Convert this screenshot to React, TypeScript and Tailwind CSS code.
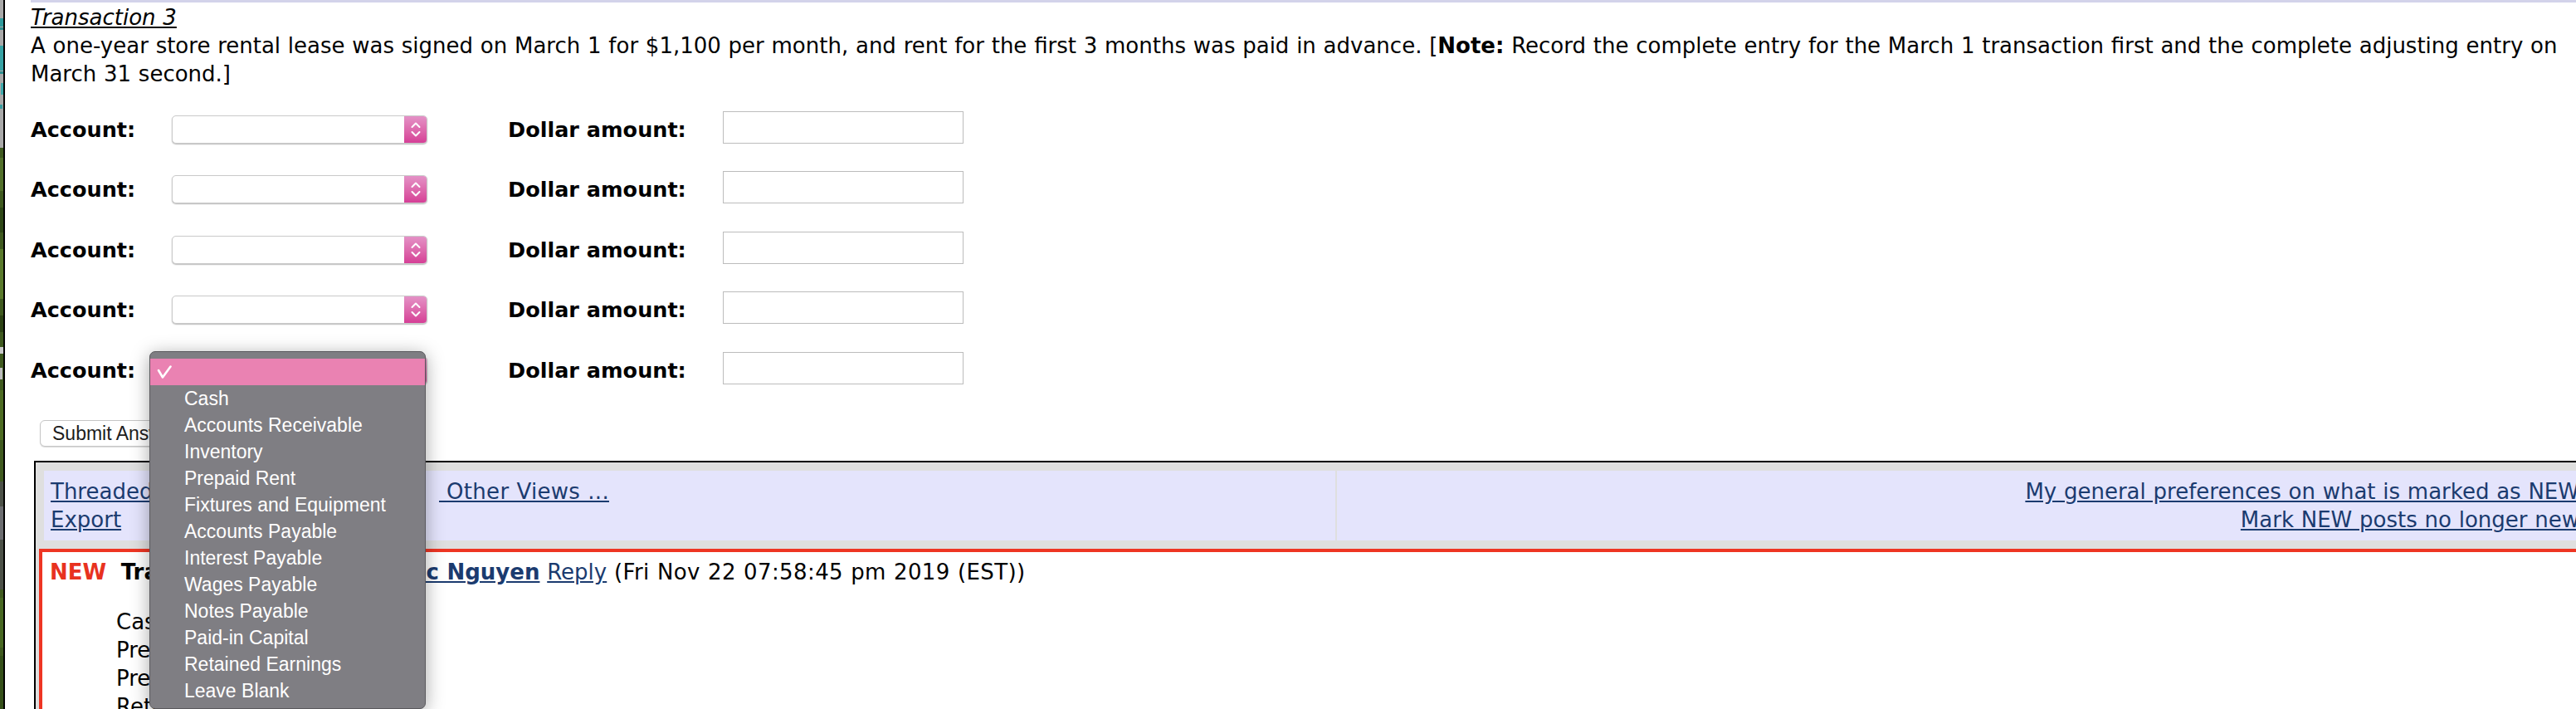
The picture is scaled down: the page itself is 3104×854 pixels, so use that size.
import React from "react";

const menuItems = [
  "Cash",
  "Accounts Receivable",
  "Inventory",
  "Prepaid Rent",
  "Fixtures and Equipment",
  "Accounts Payable",
  "Interest Payable",
  "Wages Payable",
  "Notes Payable",
  "Paid-in Capital",
  "Retained Earnings",
  "Leave Blank",
];

function LeftStrip() {
  return (
    <div className="flex h-full w-[6px] shrink-0 border-r-2 border-black">
      <svg width="4" height="854" viewBox="0 0 4 854" className="block">
        <rect x="0" y="0" width="4" height="178" fill="#a9a9a9" />
        <rect x="0" y="22" width="4" height="10" fill="#2f9a9c" />
        <rect x="0" y="33" width="4" height="3" fill="#2f8f90" />
        <rect x="0" y="55" width="4" height="30" fill="#38a3a5" />
        <rect x="0" y="86" width="4" height="3" fill="#2f8f90" />
        <rect x="1" y="100" width="3" height="14" fill="#3fa9ab" />
        <rect x="0" y="126" width="3" height="5" fill="#3a9ea0" />
        <rect x="0" y="178" width="4" height="676" fill="#3f5a1f" />
        <rect x="0" y="190" width="4" height="40" fill="#52702a" />
        <rect x="0" y="250" width="4" height="30" fill="#2e4716" />
        <rect x="0" y="300" width="4" height="60" fill="#5a7a2c" />
        <rect x="0" y="380" width="4" height="20" fill="#2c4214" />
        <rect x="0" y="418" width="4" height="8" fill="#c9c9c9" />
        <rect x="0" y="443" width="3" height="14" fill="#bdbdbd" />
        <rect x="0" y="470" width="4" height="60" fill="#4d6b22" />
        <rect x="0" y="580" width="4" height="130" fill="#4c5148" />
        <rect x="0" y="610" width="4" height="40" fill="#6c6d70" />
        <rect x="0" y="720" width="4" height="60" fill="#486822" />
        <rect x="0" y="790" width="4" height="64" fill="#35501a" />
      </svg>
    </div>
  );
}

function SelectBox() {
  return (
    <div className="flex h-[34px] w-[308px] overflow-hidden rounded-[5px] border border-[#cacaca] bg-white shadow-[0_1px_1.5px_rgba(0,0,0,0.28)]">
      <div className="flex-1" />
      <div className="flex w-[27px] items-center justify-center bg-gradient-to-b from-[#e391c6] to-[#d53e96]">
        <svg width="12" height="20" viewBox="0 0 12 20" fill="none" stroke="white" strokeWidth="2" strokeLinecap="round" strokeLinejoin="round">
          <path d="M1.5 7 L6 2.5 L10.5 7" />
          <path d="M1.5 13 L6 17.5 L10.5 13" />
        </svg>
      </div>
    </div>
  );
}

function Row() {
  return (
    <div className="flex h-[72.5px] items-center">
      <div className="mt-[5px] w-[170px] text-[25.5px] font-bold leading-[34px] [word-spacing:0px]">Account:</div>
      <div className="mt-[5px]">
        <SelectBox />
      </div>
      <div className="w-[97px]" />
      <div className="mt-[5px] w-[259px] text-[25.5px] font-bold leading-[34px] [word-spacing:0px]">Dollar amount:</div>
      <input type="text" className="h-[39px] w-[290px] border border-[#bcbcbc] bg-white outline-none" />
    </div>
  );
}

export default function App() {
  const link = "text-[#1b3b6f] underline";
  return (
    <div className="relative flex h-[854px] w-[3104px] overflow-hidden bg-white font-['DejaVu_Sans','Verdana',sans-serif] text-black [word-spacing:0.5px]">
      <LeftStrip />
      <div className="relative min-w-0 flex-1">
        <div className="ml-[31px] h-[3px] bg-[#d3d3ea]" />
        <div className="pl-[31px] pt-[1px]">
          <div className="text-[26px] leading-[34px]">
            <div>
              <span className="italic underline">Transaction 3</span>
            </div>
            <div className="whitespace-nowrap">
              A one-year store rental lease was signed on March 1 for $1,100 per month, and rent for the first 3 months was paid in advance. [<b>Note:</b> Record the complete entry for the March 1 transaction first and the complete adjusting entry on
            </div>
            <div>March 31 second.]</div>
          </div>

          <div className="mt-[11px]">
            <Row />
            <Row />
            <Row />
            <Row />
            <Row />
          </div>

          <button className="ml-[11px] mt-[26.5px] h-[32px] rounded-[6px] border border-[#c6c6c6] bg-white px-[14px] font-['Liberation_Sans',sans-serif] text-[23px] leading-none text-[#1d1d1d] shadow-[0_1px_1px_rgba(0,0,0,0.15)] [word-spacing:0px]">
            Submit Answer
          </button>

          <div className="ml-[4px] mt-[17px] w-[3140px] border-2 border-black bg-[#dfdfdf] pl-[4px] pt-[10px]">
            <div className="ml-[6px] flex gap-[2px] text-[26px] leading-[34px]">
              <div className="w-[1556px] whitespace-nowrap bg-[#e4e4fc] px-[8px] py-[8px]">
                <div>
                  <a className={link}>Threaded View</a>&nbsp;<a className={link}>Chronological View</a>&nbsp;&nbsp;<a className={`${link} tracking-[0.3px]`}>&nbsp;Other Views ...</a>
                </div>
                <div>
                  <a className={link}>Export</a>
                </div>
              </div>
              <div className="flex w-[1507px] flex-col items-end whitespace-nowrap bg-[#e4e4fc] py-[8px] pr-[10px]">
                <a className={link}>My general preferences on what is marked as NEW</a>
                <a className={link}>Mark NEW posts no longer new</a>
              </div>
            </div>

            <div className="mt-[10px] h-[400px] border-4 border-[#ee3523] bg-white pl-[9px] pt-[7px] text-[26px] leading-[34px]">
              <div className="whitespace-nowrap">
                <span className="font-bold text-[#e8321f]">NEW</span>
                &nbsp;&nbsp;<span className="font-bold">Transaction 3</span>
                <a className={`${link} ml-[112px] font-bold`}>Ngoc Nguyen</a> <a className={link}>Reply</a>{" "}
                <span className="tracking-[0.4px]">(Fri Nov 22 07:58:45 pm 2019 (EST))</span>
              </div>
              <div className="ml-[80px] mt-[26px]">
                <div>Cash</div>
                <div>Prepaid Rent</div>
                <div>Prepaid Rent</div>
                <div>Retained Earnings</div>
              </div>
            </div>
          </div>
        </div>
      </div>

      <div className="absolute left-[180px] top-[423px] h-[431px] w-[333px] overflow-hidden rounded-[7px] border border-[#5a595d] bg-[#7f7e83] pt-[8px] font-['Liberation_Sans',sans-serif] text-[23px] text-white shadow-[0_4px_22px_rgba(0,0,0,0.35)] [word-spacing:0px]">
        <div className="flex h-[32px] items-center bg-[#ea82b2] pl-[8px]">
          <svg width="18" height="16" viewBox="0 0 18 16" fill="none" stroke="white" strokeWidth="2.6" strokeLinecap="round" strokeLinejoin="round">
            <path d="M2 6 L7 14.5 L16.5 1.5" />
          </svg>
        </div>
        {menuItems.map((it) => (
          <div key={it} className="h-[32px] whitespace-nowrap pl-[41px] leading-[32px]">
            {it}
          </div>
        ))}
      </div>
    </div>
  );
}
